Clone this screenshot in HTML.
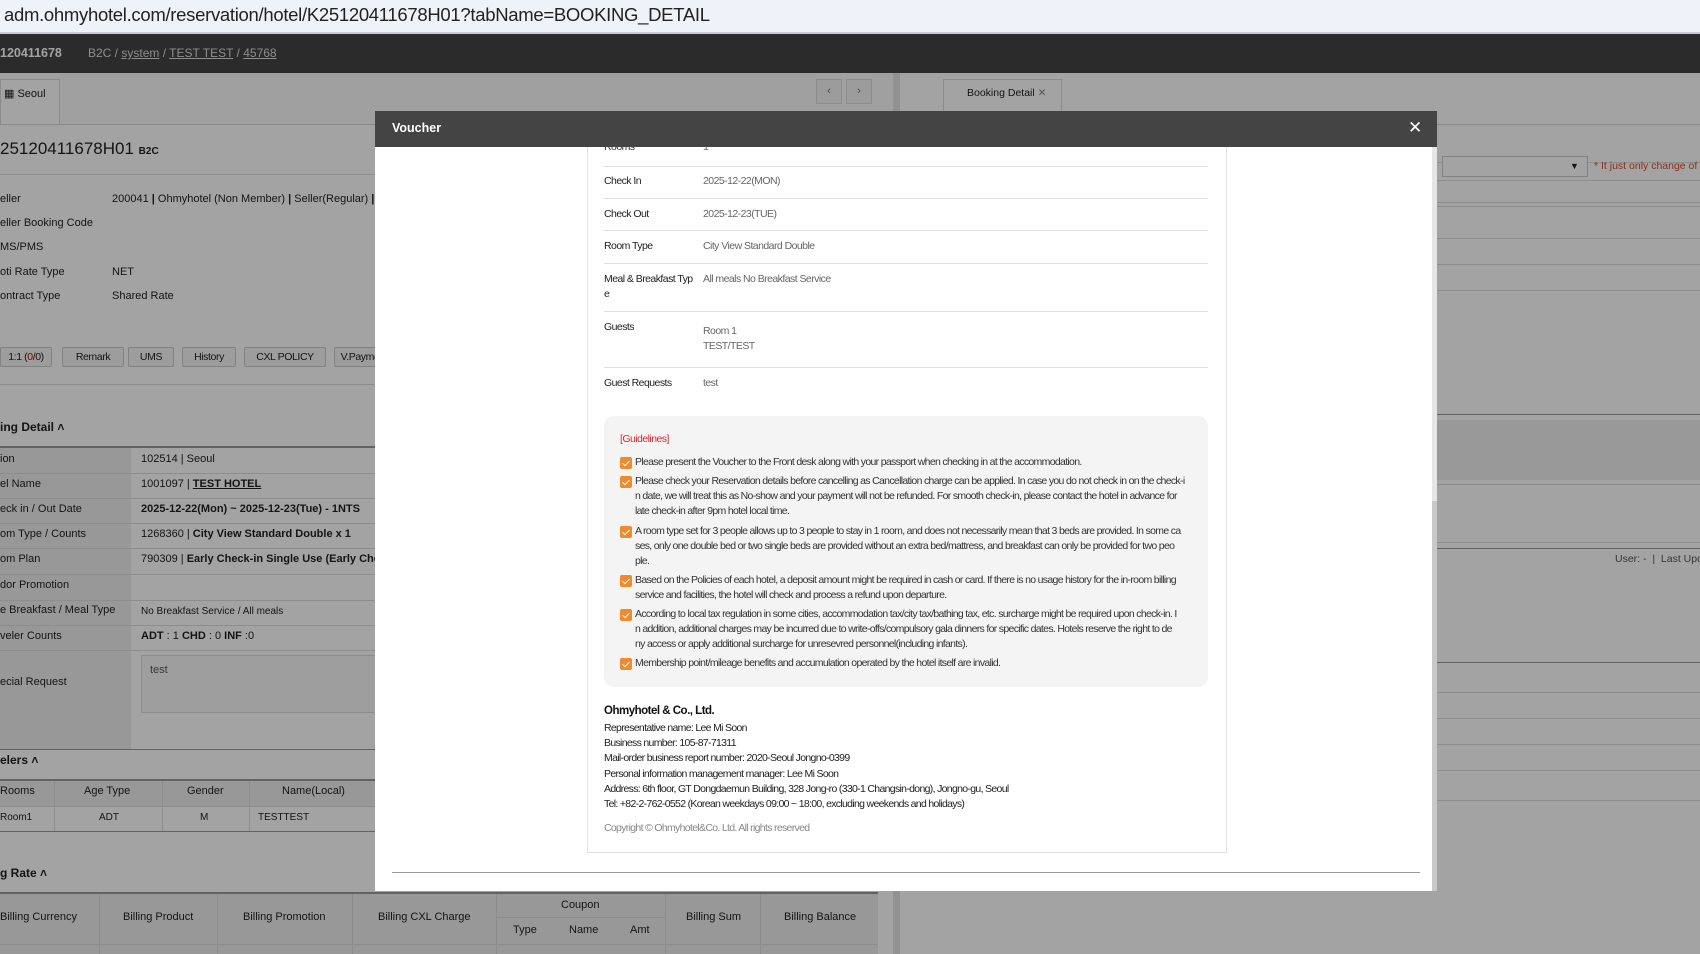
<!DOCTYPE html>
<html><head><meta charset="utf-8">
<style>
*{margin:0;padding:0;box-sizing:border-box}
body{width:1700px;height:954px;overflow:hidden;position:relative;font-family:"Liberation Sans",sans-serif;background:#fff;color:#222}
.a{position:absolute;white-space:nowrap}
#url{left:0;top:0;width:1700px;height:34px;background:#eef2f9;border-bottom:2px solid #c8ccd2}
#url span{position:absolute;left:4px;top:4px;font-size:18.5px;color:#222;letter-spacing:-0.3px}
#page{position:absolute;left:0;top:34px;width:1700px;height:920px;background:#fff}
.t{font-size:11px}
.lbl{font-size:11px;color:#222}
.hl{position:absolute;height:1px;background:#ddd}
.btn{position:absolute;top:313px;height:20px;border:1px solid #ccc;border-radius:2px;font-size:10.5px;text-align:center;line-height:18px;background:#f6f6f6;white-space:nowrap;letter-spacing:-0.4px}
#ov{position:absolute;left:0;top:34px;width:1700px;height:920px;background:rgba(0,0,0,0.36)}
#modal{position:absolute;left:375px;top:111px;width:1062px;height:780px;background:#fff;overflow:hidden}
#mh{position:absolute;left:0;top:0;width:1062px;height:36px;background:#444}
.v{font-size:10.5px;letter-spacing:-0.55px}
.gl{font-size:10.5px;letter-spacing:-0.68px;color:#333;line-height:15px}
.cb{position:absolute;left:620px;width:12px;height:12px;background:#f08a2c;border-radius:2px}
.cb:after{content:"";position:absolute;left:4px;top:2px;width:3px;height:6px;border:solid #fff;border-width:0 1.5px 1.5px 0;transform:rotate(45deg)}
</style></head><body>
<div id="url" class="a"><span>adm.ohmyhotel.com/reservation/hotel/K25120411678H01?tabName=BOOKING_DETAIL</span></div>
<div id="page">
 <div class="a" style="left:0;top:0;width:1700px;height:39px;background:#444"></div>
 <div class="a" style="left:0;top:12px;font-size:12.5px;font-weight:bold;color:#fff">120411678</div>
 <div class="a" style="left:88px;top:12px;font-size:12px;color:#ddd">B2C / <u>system</u> / <u>TEST TEST</u> / <u>45768</u></div>
 <div class="a" style="left:0;top:39px;width:893px;height:881px;background:#fafafa"></div>
 <div class="a" style="left:0;top:45px;width:60px;height:46px;background:#fff;border:1px solid #ddd;border-bottom:none"></div>
 <div class="a t" style="left:4px;top:53px">&#9638; Seoul</div>
 <div class="hl" style="left:0;top:90px;width:893px;background:#d6d6d6"></div>
 <div class="a" style="left:816px;top:45px;width:26px;height:25px;border:1px solid #ddd;background:#f4f4f4;font-size:11px;text-align:center;line-height:23px;color:#777">&lsaquo;</div>
 <div class="a" style="left:846px;top:45px;width:26px;height:25px;border:1px solid #ddd;background:#f4f4f4;font-size:11px;text-align:center;line-height:23px;color:#777">&rsaquo;</div>
 <div class="a" style="left:0;top:91px;width:893px;height:829px;background:#fff"></div>
 <div class="a" style="left:0;top:105px;font-size:17px;color:#222">25120411678H01 <span style="font-size:10px;font-weight:bold">B2C</span></div>
 <div class="hl" style="left:0;top:140px;width:893px"></div>
 <div class="a lbl" style="left:0;top:159px">eller</div><div class="a t" style="left:112px;top:159px">200041 <b>|</b> Ohmyhotel (Non Member) <b>|</b> Seller(Regular) <b>|</b></div>
 <div class="a lbl" style="left:0;top:183px">eller Booking Code</div>
 <div class="a lbl" style="left:0;top:207px">MS/PMS</div>
 <div class="a lbl" style="left:0;top:232px">oti Rate Type</div><div class="a t" style="left:112px;top:232px">NET</div>
 <div class="a lbl" style="left:0;top:256px">ontract Type</div><div class="a t" style="left:112px;top:256px">Shared Rate</div>
 <div class="btn" style="left:0;width:52px">1:1 (<span style="color:#c00">0</span>/0)</div>
 <div class="btn" style="left:62px;width:62px">Remark</div>
 <div class="btn" style="left:128px;width:46px">UMS</div>
 <div class="btn" style="left:182px;width:54px">History</div>
 <div class="btn" style="left:244px;width:82px">CXL POLICY</div>
 <div class="btn" style="left:334px;width:60px">V.Payment</div>
 <div class="hl" style="left:0;top:350px;width:893px"></div>
 <div class="a" style="left:0;top:386px;font-size:12px;font-weight:bold">ing Detail &#708;</div>
 <div class="a" style="left:0;top:412px;width:893px;height:2px;background:#999"></div>
 <div class="a" style="left:0;top:414px;width:131px;height:302px;background:#eee"></div>
 <div class="a t" style="left:0;top:419px">ion</div><div class="a t" style="left:141px;top:419px">102514 | Seoul</div>
 <div class="hl" style="left:0;top:439px;width:893px"></div>
 <div class="a t" style="left:0;top:444px">el Name</div><div class="a t" style="left:141px;top:444px">1001097 | <b><u>TEST HOTEL</u></b></div>
 <div class="hl" style="left:0;top:464px;width:893px"></div>
 <div class="a t" style="left:0;top:469px">eck in / Out Date</div><div class="a t" style="left:141px;top:469px;font-weight:bold">2025-12-22(Mon) ~ 2025-12-23(Tue) - 1NTS</div>
 <div class="hl" style="left:0;top:489px;width:893px"></div>
 <div class="a t" style="left:0;top:494px">om Type / Counts</div><div class="a t" style="left:141px;top:494px">1268360 | <b>City View Standard Double x 1</b></div>
 <div class="hl" style="left:0;top:514px;width:893px"></div>
 <div class="a t" style="left:0;top:519px">om Plan</div><div class="a t" style="left:141px;top:519px">790309 | <b>Early Check-in Single Use (Early Check-in)</b></div>
 <div class="hl" style="left:0;top:540px;width:893px"></div>
 <div class="a t" style="left:0;top:545px">dor Promotion</div>
 <div class="hl" style="left:0;top:566px;width:893px"></div>
 <div class="a t" style="left:0;top:570px">e Breakfast / Meal Type</div><div class="a" style="left:141px;top:572px;font-size:10px">No Breakfast Service / All meals</div>
 <div class="hl" style="left:0;top:591px;width:893px"></div>
 <div class="a t" style="left:0;top:596px">veler Counts</div><div class="a t" style="left:141px;top:596px"><b>ADT</b> : 1 <b>CHD</b> : 0 <b>INF</b> :0</div>
 <div class="hl" style="left:0;top:616px;width:893px"></div>
 <div class="a" style="left:141px;top:621px;width:240px;height:58px;border:1px solid #ddd;background:#f7f7f7"></div>
 <div class="a t" style="left:150px;top:630px;color:#555">test</div>
 <div class="a t" style="left:0;top:642px">ecial Request</div>
 <div class="a" style="left:0;top:715px;width:893px;height:1px;background:#999"></div>
 <div class="a" style="left:0;top:719px;font-size:12px;font-weight:bold">elers &#708;</div>
 <div class="a" style="left:0;top:745px;width:375px;height:2px;background:#999"></div>
 <div class="a" style="left:0;top:747px;width:375px;height:25px;background:#eee"></div>
 <div class="a t" style="left:0;top:751px">Rooms</div><div class="a t" style="left:84px;top:751px">Age Type</div><div class="a t" style="left:187px;top:751px">Gender</div><div class="a t" style="left:282px;top:751px">Name(Local)</div>
 <div class="hl" style="left:0;top:772px;width:375px"></div>
 <div class="a" style="left:0;top:797px;width:375px;height:1px;background:#999"></div>
 <div class="a t" style="left:0;top:778px;font-size:10px">Room1</div><div class="a t" style="left:99px;top:778px;font-size:10px">ADT</div><div class="a t" style="left:200px;top:778px;font-size:10px">M</div><div class="a t" style="left:258px;top:778px;font-size:10px">TESTTEST</div>
 <div class="a" style="left:54px;top:747px;width:1px;height:50px;background:#ddd"></div>
 <div class="a" style="left:162px;top:747px;width:1px;height:50px;background:#ddd"></div>
 <div class="a" style="left:249px;top:747px;width:1px;height:50px;background:#ddd"></div>
 <div class="a" style="left:0;top:832px;font-size:12px;font-weight:bold">g Rate &#708;</div>
 <div class="a" style="left:0;top:858px;width:878px;height:2px;background:#999"></div>
 <div class="a" style="left:0;top:860px;width:878px;height:60px;background:#eee"></div>
 <div class="a t" style="left:0;top:877px">Billing Currency</div>
 <div class="a t" style="left:123px;top:877px">Billing Product</div>
 <div class="a t" style="left:243px;top:877px">Billing Promotion</div>
 <div class="a t" style="left:378px;top:877px">Billing CXL Charge</div>
 <div class="a t" style="left:561px;top:865px">Coupon</div>
 <div class="a t" style="left:513px;top:890px">Type</div><div class="a t" style="left:569px;top:890px">Name</div><div class="a t" style="left:630px;top:890px">Amt</div>
 <div class="a t" style="left:686px;top:877px">Billing Sum</div>
 <div class="a t" style="left:784px;top:877px">Billing Balance</div>
 <div class="hl" style="left:496px;top:883px;width:169px"></div>
 <div class="hl" style="left:0;top:910px;width:878px"></div>
 <div class="a" style="left:99px;top:860px;width:1px;height:60px;background:#ddd"></div>
 <div class="a" style="left:217px;top:860px;width:1px;height:60px;background:#ddd"></div>
 <div class="a" style="left:352px;top:860px;width:1px;height:60px;background:#ddd"></div>
 <div class="a" style="left:496px;top:860px;width:1px;height:60px;background:#ddd"></div>
 <div class="a" style="left:665px;top:860px;width:1px;height:60px;background:#ddd"></div>
 <div class="a" style="left:760px;top:860px;width:1px;height:60px;background:#ddd"></div>
 <div class="a" style="left:893px;top:39px;width:7px;height:881px;background:#e4e4e4"></div>
 <div class="a" style="left:900px;top:39px;width:800px;height:881px;background:#fff"></div>
 <div class="a" style="left:943px;top:45px;width:119px;height:46px;background:#fff;border:1px solid #ddd;border-bottom:none"></div>
 <div class="a" style="left:967px;top:53px;font-size:10.5px">Booking Detail <span style="color:#888">&#10005;</span></div>
 <div class="hl" style="left:900px;top:90px;width:800px;background:#d6d6d6"></div>
 <div class="hl" style="left:900px;top:128px;width:800px"></div>
 <div class="a" style="left:1442px;top:122px;width:146px;height:21px;border:1px solid #ccc;background:#fff"></div>
 <div class="a" style="left:1570px;top:127px;font-size:9px">&#9660;</div>
 <div class="a" style="left:1594px;top:126px;font-size:10.5px;color:#e04a2a">* It just only change of b</div>
 <div class="hl" style="left:1437px;top:146px;width:263px"></div>
 <div class="hl" style="left:1437px;top:168px;width:263px"></div>
 <div class="hl" style="left:1437px;top:172px;width:263px"></div>
 <div class="hl" style="left:1437px;top:204px;width:263px"></div>
 <div class="hl" style="left:1437px;top:230px;width:263px"></div>
 <div class="hl" style="left:1437px;top:256px;width:263px"></div>
 <div class="a" style="left:1437px;top:380px;width:263px;height:1px;background:#999"></div>
 <div class="a" style="left:1437px;top:386px;width:263px;height:60px;background:#f0f0f0"></div>
 <div class="hl" style="left:1437px;top:450px;width:263px"></div>
 <div class="hl" style="left:1437px;top:508px;width:263px"></div>
 <div class="a" style="left:1437px;top:514px;width:263px;height:1px;background:#999"></div>
 <div class="a" style="left:1615px;top:519px;font-size:10.5px;color:#555">User: - &nbsp;| &nbsp;Last Update</div>
 <div class="a" style="left:1437px;top:628px;width:263px;height:1px;background:#999"></div>
 <div class="hl" style="left:1437px;top:658px;width:263px"></div>
 <div class="hl" style="left:1437px;top:684px;width:263px"></div>
 <div class="hl" style="left:1437px;top:710px;width:263px"></div>
 <div class="hl" style="left:1437px;top:736px;width:263px"></div>
 <div class="hl" style="left:1437px;top:766px;width:263px"></div>
</div>
<div id="ov"></div>
<div id="modal">
 <div id="mh"></div>
 <div class="a" style="left:17px;top:10px;font-size:12.5px;font-weight:bold;color:#fff">Voucher</div>
 <div class="a" style="left:1033px;top:7px;font-size:17px;color:#fff">&#10005;</div>
 <div class="a" style="left:1057px;top:36px;width:5px;height:354px;background:#e6e6e6"></div>
 <div class="a" style="left:1057px;top:390px;width:5px;height:390px;background:#c8c8c8"></div>
</div>
<div class="a" style="left:587px;top:147px;width:640px;height:706px;border:1px solid #e2e2e2;border-top:none"></div>
<div class="a" style="left:587px;top:147px;width:640px;height:12px;overflow:hidden">
 <div class="a v" style="left:17px;top:-6px;color:#333">Rooms</div><div class="a v" style="left:116px;top:-6px;color:#666">1</div>
</div>
<div class="hl" style="left:604px;top:166px;width:604px;background:#e0e0e0"></div>
<div class="a v" style="left:604px;top:175px">Check In</div><div class="a v" style="left:703px;top:175px;color:#666">2025-12-22(MON)</div>
<div class="hl" style="left:604px;top:198px;width:604px;background:#e0e0e0"></div>
<div class="a v" style="left:604px;top:208px">Check Out</div><div class="a v" style="left:703px;top:208px;color:#666">2025-12-23(TUE)</div>
<div class="hl" style="left:604px;top:230px;width:604px;background:#e0e0e0"></div>
<div class="a v" style="left:604px;top:240px">Room Type</div><div class="a v" style="left:703px;top:240px;color:#666">City View Standard Double</div>
<div class="hl" style="left:604px;top:263px;width:604px;background:#e0e0e0"></div>
<div class="a v" style="left:604px;top:273px">Meal &amp; Breakfast Typ</div><div class="a v" style="left:604px;top:288px">e</div><div class="a v" style="left:703px;top:273px;color:#666">All meals No Breakfast Service</div>
<div class="hl" style="left:604px;top:311px;width:604px;background:#e0e0e0"></div>
<div class="a v" style="left:604px;top:321px">Guests</div><div class="a v" style="left:703px;top:325px;color:#666">Room 1</div><div class="a v" style="left:703px;top:340px;color:#666">TEST/TEST</div>
<div class="hl" style="left:604px;top:367px;width:604px;background:#e0e0e0"></div>
<div class="a v" style="left:604px;top:377px">Guest Requests</div><div class="a v" style="left:703px;top:377px;color:#666">test</div>
<div class="a" style="left:604px;top:416px;width:604px;height:271px;background:#f4f4f4;border-radius:10px"></div>
<div class="a v" style="left:620px;top:433px;color:#e8222e">[Guidelines]</div>
<div class="cb" style="top:457px"></div>
<div class="a gl" style="left:635px;top:455px">Please present the Voucher to the Front desk along with your passport when checking in at the accommodation.</div>
<div class="cb" style="top:476px"></div>
<div class="a gl" style="left:635px;top:474px">Please check your Reservation details before cancelling as Cancellation charge can be applied. In case you do not check in on the check-i<br>n date, we will treat this as No-show and your payment will not be refunded. For smooth check-in, please contact the hotel in advance for<br>late check-in after 9pm hotel local time.</div>
<div class="cb" style="top:526px"></div>
<div class="a gl" style="left:635px;top:524px">A room type set for 3 people allows up to 3 people to stay in 1 room, and does not necessarily mean that 3 beds are provided. In some ca<br>ses, only one double bed or two single beds are provided without an extra bed/mattress, and breakfast can only be provided for two peo<br>ple.</div>
<div class="cb" style="top:575px"></div>
<div class="a gl" style="left:635px;top:573px">Based on the Policies of each hotel, a deposit amount might be required in cash or card. If there is no usage history for the in-room billing<br>service and facilities, the hotel will check and process a refund upon departure.</div>
<div class="cb" style="top:609px"></div>
<div class="a gl" style="left:635px;top:607px">According to local tax regulation in some cities, accommodation tax/city tax/bathing tax, etc. surcharge might be required upon check-in. I<br>n addition, additional charges may be incurred due to write-offs/compulsory gala dinners for specific dates. Hotels reserve the right to de<br>ny access or apply additional surcharge for unresevred personnel(including infants).</div>
<div class="cb" style="top:658px"></div>
<div class="a gl" style="left:635px;top:656px">Membership point/mileage benefits and accumulation operated by the hotel itself are invalid.</div>
<div class="a" style="left:604px;top:705px;font-size:11.5px;font-weight:bold;letter-spacing:-0.5px;color:#111">Ohmyhotel &amp; Co., Ltd.</div>
<div class="a gl" style="left:604px;top:721px;color:#222;line-height:15.2px">Representative name: Lee Mi Soon<br>Business number: 105-87-71311<br>Mail-order business report number: 2020-Seoul Jongno-0399<br>Personal information management manager: Lee Mi Soon<br>Address: 6th floor, GT Dongdaemun Building, 328 Jong-ro (330-1 Changsin-dong), Jongno-gu, Seoul<br>Tel: +82-2-762-0552 (Korean weekdays 09:00 ~ 18:00, excluding weekends and holidays)</div>
<div class="a gl" style="left:604px;top:821px;color:#888">Copyright © Ohmyhotel&amp;Co. Ltd. All rights reserved</div>
<div class="a" style="left:392px;top:872px;width:1028px;height:1px;background:#999"></div>
</body></html>
